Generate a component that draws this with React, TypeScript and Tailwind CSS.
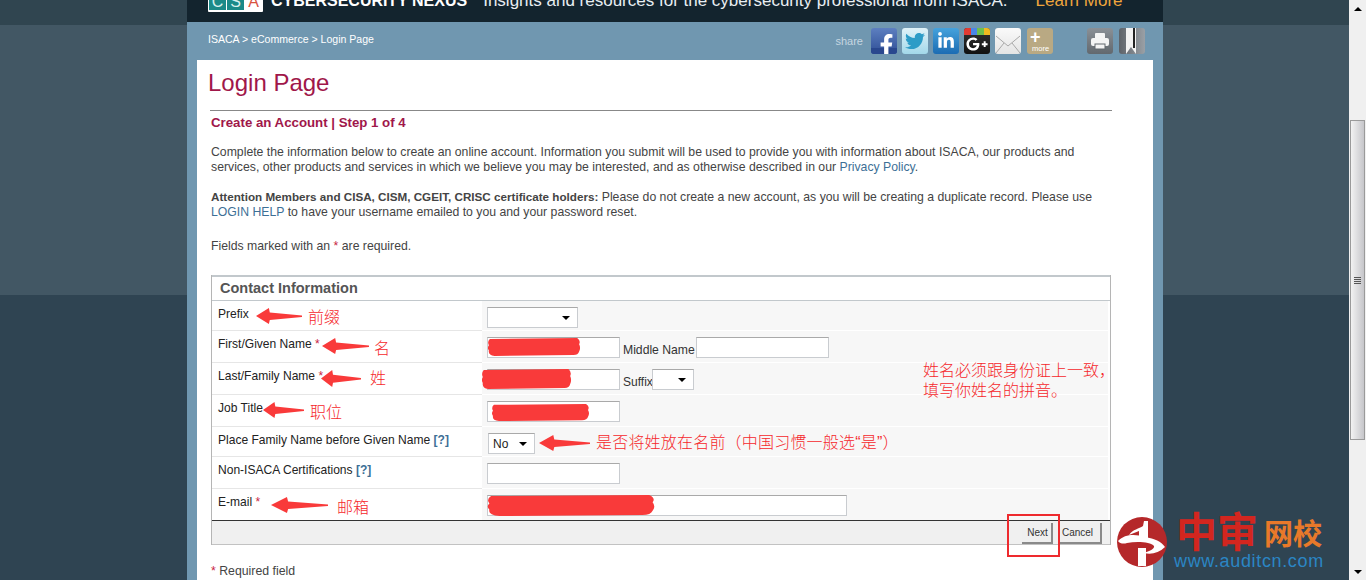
import { FaFacebookF, FaGooglePlusG, FaLinkedinIn, FaTwitter } from "react-icons/fa";

const sans = "font-['Liberation_Sans','Noto_Sans_CJK_SC',sans-serif]";
const cjk = "font-['Noto_Sans_CJK_SC',sans-serif]";

function Arrow({ className }: { className: string }) {
    return (
        <svg className={"absolute " + className} viewBox="0 0 100 32" preserveAspectRatio="none">
            <polygon points="0,16 28,0 30,9 100,15 100,18 30,24 28,32" fill="#f93a3a" />
        </svg>
    );
}

function Scribble({ className }: { className: string }) {
    return (
        <svg className={"absolute " + className} viewBox="0 0 100 20" preserveAspectRatio="none">
            <path
                d="M3 1 L96 0 Q100 3 98 7 Q100 11 98 15 Q97 19 92 19 L8 20 Q1 19 2 14 Q0 11 2 8 Q0 4 3 1 Z"
                fill="#f93a3a"
            />
        </svg>
    );
}

function Note({ className, children }: { className: string; children: string }) {
    return (
        <span className={"absolute whitespace-nowrap text-[16px] leading-[20px] font-light text-[#f5282c] " + className}>
            {children}
        </span>
    );
}

function TextBox({ className }: { className: string }) {
    return <div className={"h-[21px] bg-white border border-[#c9ccd0] border-t-[#a9a9a9] " + className} />;
}

function SelectBox({ className, value }: { className: string; value?: string }) {
    return (
        <div className={"h-[21px] bg-white border border-[#c9ccd0] border-t-[#a9a9a9] flex items-center justify-between pl-[4px] pr-[7px] text-[12px] text-[#222] " + className}>
            <span>{value}</span>
            <span className="w-0 h-0 border-x-[4px] border-x-transparent border-t-[4px] border-t-black" />
        </div>
    );
}

function Req() {
    return <span className="text-[#c8233f]"> *</span>;
}

function Help() {
    return <span className="text-[#3d6f96] font-bold"> [?]</span>;
}

function Row({ height, label, children }: { height: string; label: React.ReactNode; children?: React.ReactNode }) {
    return (
        <div className={"flex " + height}>
            <div className="w-[270px] border-b border-[#e6e6e6] pl-[6px] pt-[6px] text-[12.05px] leading-[15px] text-[#222]">{label}</div>
            <div className="flex-1 border-b border-white bg-[#f7f7f7] pl-[5px] pt-[6px] mr-[2px] flex items-start text-[12px] text-[#333]">{children}</div>
        </div>
    );
}

function Tile({ className, children }: { className: string; children?: React.ReactNode }) {
    return (
        <div className={"w-[26px] h-[26px] rounded-[3px] flex items-center justify-center overflow-hidden relative " + className}>
            {children}
        </div>
    );
}

function ShareIcons() {
    return (
        <div className="flex items-center">
            <span className="text-[11px] text-[#c6d6e0] mr-[8px]">share</span>
            <div className="flex gap-[5px]">
                <Tile className="bg-[linear-gradient(#5d7fc0,#2f4f96)] text-white">
                    <div className="absolute bottom-0 inset-x-0 h-[6px] bg-[#29478e]" />
                    <FaFacebookF className="relative w-[22px] h-[22px] mt-[7px] ml-[5px]" />
                </Tile>
                <Tile className="bg-[linear-gradient(#e0f2f8,#a3d8ea)] text-[#2d9cc7]">
                    <FaTwitter className="w-[20px] h-[20px]" />
                </Tile>
                <Tile className="bg-[linear-gradient(#45a2dc,#1c6cb3)] text-white">
                    <FaLinkedinIn className="w-[18px] h-[18px]" />
                </Tile>
                <Tile className="bg-[linear-gradient(#333,#111)] text-white">
                    <div className="absolute top-0 inset-x-0 h-[7px] flex">
                        <div className="flex-1 bg-[#e23a32]" />
                        <div className="flex-1 bg-[#4a86e8]" />
                        <div className="flex-1 bg-[#6fbf4b]" />
                        <div className="flex-1 bg-[#f1b91f]" />
                    </div>
                    <FaGooglePlusG className="w-[22px] h-[22px] mt-[5px]" />
                </Tile>
                <Tile className="bg-[linear-gradient(#fafafa,#e4e4e4)]">
                    <svg viewBox="0 0 26 26" className="w-[26px] h-[26px]" fill="none" stroke="#a8a8a8" strokeWidth="1">
                        <path d="M1 8 L13 18 L25 8 M1 25 L9 15 M25 25 L17 15" />
                    </svg>
                </Tile>
                <Tile className="bg-[#b9a983] text-white ml-[1px]">
                    <span className="absolute top-[-2px] left-[3px] text-[18px] font-bold leading-[22px]">+</span>
                    <span className="absolute bottom-[1px] left-[5px] text-[7.5px] leading-[9px]">more</span>
                </Tile>
            </div>
            <div className="flex gap-[6px] ml-[34px]">
                <Tile className="bg-[linear-gradient(#8a9096,#62686e)]">
                    <svg viewBox="0 0 26 26" className="w-[26px] h-[26px]" fill="#f4f4f4">
                        <rect x="8" y="5" width="10" height="6" rx="1" />
                        <rect x="4" y="10" width="18" height="8" rx="2" />
                        <rect x="8" y="16" width="10" height="5" stroke="#62686e" strokeWidth="1" />
                    </svg>
                </Tile>
                <Tile className="bg-[linear-gradient(90deg,#5d6268,#9aa0a6)]">
                    <svg viewBox="0 0 26 26" className="w-[26px] h-[26px]">
                        <path d="M7 0 H17 V26 L12 19 L7 26 Z" fill="#f2f2f2" />
                        <rect x="14" y="0" width="2" height="20" fill="#222" />
                    </svg>
                </Tile>
            </div>
        </div>
    );
}

function CsaLogo() {
    return (
        <div className="w-[55px] h-[12px] bg-white flex gap-[1px] px-[1px] pb-[2px] rounded-b-[1px]">
            <div className="w-[17px] overflow-hidden bg-[#1b8a88] text-[#d8f0ee] text-[16px] leading-[4px] text-center">C</div>
            <div className="w-[17px] overflow-hidden bg-[#1b8a88] text-[#d8f0ee] text-[16px] leading-[4px] text-center">S</div>
            <div className="w-[17px] overflow-hidden bg-white text-[#d9533f] text-[16px] leading-[4px] text-center">A</div>
        </div>
    );
}

function SiteBadge() {
    return (
        <div className="absolute left-[1117px] top-[517px] flex items-start">
            <svg viewBox="0 0 50 50" className="w-[50px] h-[50px]">
                <circle cx="25" cy="25" r="25" fill="#b5282a" />
                <path d="M27 4 L31 4 L31 22 L22 20 L22 14 L12 18 C16 12 22 12 26 9 Z" fill="#fff" />
                <path d="M21 31 h8 v18 h-8 Z" fill="#fff" />
                <path
                    d="M1 24 C8 17 18 17 28 20 C38 22 44 24 48 30 C42 36 34 38 27 36 C32 34 38 32 37 29 C34 25 20 24 10 26 C7 27 3 27 1 24 Z"
                    fill="#fff"
                />
            </svg>
            <div className="ml-[9px] -mt-[6px]">
                <div className="flex items-end h-[37px]">
                    <span className={"text-[41px] leading-[37px] font-bold text-[#d3261f] " + cjk}>中审</span>
                    <span className={"text-[29px] leading-[32px] font-bold text-[#e8792a] ml-[6px] " + cjk}>网校</span>
                </div>
                <div className="mt-[4px] -ml-[2px] text-[18px] leading-[18px] text-[#2b86c4] tracking-[0.65px]">www.auditcn.com</div>
            </div>
        </div>
    );
}

export default function App() {
    return (
        <div className={"relative w-[1366px] h-[580px] overflow-hidden flex " + sans}>
            <div className="flex-1 bg-[linear-gradient(#304550_0,#304550_25px,#425764_25px,#425764_295px,#2f4452_295px)]">
                <div className="ml-[187px] w-[976px] h-full flex flex-col bg-[#7097b0]">
                    <div className="h-[22px] shrink-0 bg-[#13242e] flex items-start pl-[21px] overflow-hidden">
                        <CsaLogo />
                        <div className="flex items-center h-[18px] -mt-[8px] text-[17px] leading-[18px] whitespace-nowrap">
                            <span className="ml-[8px] text-[16px] font-bold text-white">CYBERSECURITY NEXUS</span>
                            <span className="ml-[16px] text-[#e8eef2]">Insights and resources for the cybersecurity professional from ISACA.</span>
                            <span className="ml-[28px] text-[#f0a63c]">Learn More</span>
                        </div>
                    </div>
                    <div className="h-[38px] shrink-0 flex items-center justify-between pl-[21px] pr-[18px]">
                        <span className="-mt-[2px] text-[10.55px] text-white">ISACA &gt; eCommerce &gt; Login Page</span>
                        <ShareIcons />
                    </div>
                    <div className="ml-[10px] w-[956px] flex-1 bg-white pl-[11px]">
                        <h1 className="mt-[8px] text-[24px] leading-[30px] text-[#a0174a]">Login Page</h1>
                        <div className="ml-[2px] mt-[12px] w-[902px] border-t border-[#888]" />
                        <h2 className="ml-[3px] mt-[4px] text-[13.25px] leading-[16px] font-bold text-[#a0174a]">Create an Account | Step 1 of 4</h2>
                        <div className="ml-[3px] w-[900px] text-[12.25px] leading-[15px] text-[#444]">
                            <p className="mt-[14px]">
                                Complete the information below to create an online account. Information you submit will be used to provide you with information about ISACA, our products and services, other products and services in which we believe you may be interested, and as otherwise described in our <span className="text-[#3d6f96]">Privacy Policy</span>.
                            </p>
                            <p className="mt-[14px]">
                                <b className="text-[11.67px]">Attention Members and CISA, CISM, CGEIT, CRISC certificate holders:</b> Please do not create a new account, as you will be creating a duplicate record. Please use <span className="text-[#3d6f96]">LOGIN HELP</span> to have your username emailed to you and your password reset.
                            </p>
                            <p className="mt-[19px]">
                                Fields marked with an <span className="text-[#c8233f]">*</span> are required.
                            </p>
                        </div>
                        <div className="ml-[3px] mt-[21px] w-[900px] border-x border-[#b5b5b5]">
                            <div className="h-[26px] border-t-2 border-b border-[#c2c8cc] pl-[8px] pt-[2px] text-[14.5px] leading-[18px] font-bold text-[#555]">
                                Contact Information
                            </div>
                            <Row height="h-[30px]" label="Prefix">
                                <SelectBox className="w-[91px]" />
                            </Row>
                            <Row height="h-[32px]" label={<>First/Given Name<Req /></>}>
                                <TextBox className="w-[133px]" />
                                <span className="ml-[3px] mt-[6px] leading-[15px] text-[12.2px]">Middle Name</span>
                                <TextBox className="w-[133px] ml-[1px]" />
                            </Row>
                            <Row height="h-[32px]" label={<>Last/Family Name<Req /></>}>
                                <TextBox className="w-[133px]" />
                                <span className="ml-[3px] mt-[6px] leading-[15px]">Suffix</span>
                                <SelectBox className="w-[42px] -ml-[1px]" />
                            </Row>
                            <Row height="h-[32px]" label="Job Title">
                                <TextBox className="w-[133px]" />
                            </Row>
                            <Row height="h-[30px]" label={<>Place Family Name before Given Name<Help /></>}>
                                <SelectBox className="w-[47px] ml-[1px]" value="No" />
                            </Row>
                            <Row height="h-[32px]" label={<>Non-ISACA Certifications<Help /></>}>
                                <TextBox className="w-[133px]" />
                            </Row>
                            <div className="h-[32px] flex border-b border-[#333]">
                                <div className="w-[270px] pl-[6px] pt-[6px] text-[12.05px] leading-[15px] text-[#222]">E-mail<Req /></div>
                                <div className="flex-1 bg-[#f7f7f7] pl-[5px] pt-[6px] mr-[2px]">
                                    <TextBox className="w-[360px]" />
                                </div>
                            </div>
                            <div className="h-[24px] bg-[#f0f0f0] border-b border-[#c2c2c2] flex justify-end items-start pt-[2px] pr-[8px] gap-[7px] text-[10px] text-[#333]">
                                <div className="w-[31px] h-[21px] pl-[2px] bg-[#efefef] border-r-2 border-b-2 border-[#8a8a8a] flex items-center justify-center">Next</div>
                                <div className="w-[42px] h-[21px] pr-[5px] bg-[#efefef] border-r-2 border-b-2 border-[#8a8a8a] flex items-center justify-center">Cancel</div>
                            </div>
                        </div>
                        <p className="ml-[3px] mt-[19px] text-[12.3px] leading-[15px] text-[#444]">
                            <span className="text-[#c8233f]">*</span> Required field
                        </p>
                    </div>
                </div>
            </div>

            <div className="w-[17px] shrink-0 bg-[#f0f0f0] flex flex-col items-center">
                <span className="mt-[7px] w-0 h-0 border-x-[4px] border-x-transparent border-b-[4px] border-b-black" />
                <div className="mt-[109px] w-[15px] h-[320px] border border-[#9a9a9a] bg-[linear-gradient(90deg,#f2f2f2,#c6c6ca)] flex flex-col items-center justify-center gap-[1px]">
                    <span className="w-[7px] h-px bg-[#555]" />
                    <span className="w-[7px] h-px bg-[#555]" />
                    <span className="w-[7px] h-px bg-[#555]" />
                    <span className="w-[7px] h-px bg-[#555]" />
                </div>
                <span className="mt-auto mb-[6px] w-0 h-0 border-x-[4px] border-x-transparent border-t-[4px] border-t-black" />
            </div>

            <Scribble className="left-[487px] top-[338px] w-[94px] h-[18px]" />
            <Scribble className="left-[481px] top-[369px] w-[91px] h-[20px]" />
            <Scribble className="left-[491px] top-[404px] w-[99px] h-[17px]" />
            <Scribble className="left-[486px] top-[495px] w-[170px] h-[21px]" />

            <Arrow className="left-[256px] top-[308px] w-[46px] h-[16px]" />
            <Arrow className="left-[322px] top-[338px] w-[47px] h-[16px]" />
            <Arrow className="left-[321px] top-[370px] w-[40px] h-[17px]" />
            <Arrow className="left-[263px] top-[402px] w-[41px] h-[16px]" />
            <Arrow className="left-[539px] top-[435px] w-[51px] h-[16px]" />
            <Arrow className="left-[271px] top-[497px] w-[57px] h-[16px]" />

            <Note className="left-[308px] top-[308px]">前缀</Note>
            <Note className="left-[374px] top-[339px]">名</Note>
            <Note className="left-[370px] top-[369px]">姓</Note>
            <Note className="left-[310px] top-[403px]">职位</Note>
            <Note className="left-[337px] top-[498px]">邮箱</Note>
            <Note className="left-[596px] top-[433px] tracking-[0.2px]">是否将姓放在名前（中国习惯一般选“是”）</Note>
            <Note className="left-[923px] top-[361px]">姓名必须跟身份证上一致，</Note>
            <Note className="left-[923px] top-[381px]">填写你姓名的拼音。</Note>

            <div className="absolute left-[1007px] top-[514px] w-[53px] h-[43px] border-2 border-[#ee2a2e]" />
            <SiteBadge />
        </div>
    );
}
